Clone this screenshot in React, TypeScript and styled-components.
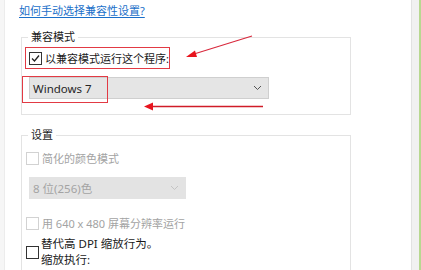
import styled, { createGlobalStyle } from 'styled-components';

const GlobalStyle = createGlobalStyle`
  html, body {
    margin: 0;
    padding: 0;
    background: #ffffff;
  }
  body {
    font-family: "Noto Sans", "Noto Sans CJK SC", sans-serif;
    font-size: 11px;
    color: #1a1a1a;
  }
`;

const Page = styled.div`
  position: relative;
  display: flex;
  width: 421px;
  height: 270px;
  overflow: hidden;
  background: #ffffff;
`;

const LeftEdge = styled.div`
  width: 4px;
  flex: none;
  background: #f6f6f6;
  border-right: 1px solid #ececec;
`;

const Main = styled.div`
  flex: 1;
  display: flex;
  flex-direction: column;
  align-items: flex-start;
  padding: 3px 0 0 14px;
`;

const RightEdge = styled.div`
  width: 7px;
  flex: none;
  margin-left: auto;
  background: #f1f1f1;
  border-left: 1px solid #e2e2e2;
  border-right: 2px solid #b8d890;
`;

const HelpLink = styled.a`
  color: #1a6fc9;
  text-decoration: underline;
  text-underline-offset: 2px;
  line-height: 15px;
  cursor: pointer;
`;

const Group = styled.fieldset<{ $top: number; $open?: boolean }>`
  margin: ${(p) => p.$top}px 0 0 2px;
  width: 330px;
  box-sizing: border-box;
  padding: 3px 0 ${(p) => (p.$open ? 40 : 15)}px 3px;
  border: 1px solid #e3e3e3;
  ${(p) => (p.$open ? 'border-bottom: none;' : '')}
  display: flex;
  flex-direction: column;
  align-items: flex-start;
`;

const Legend = styled.legend`
  margin-left: 3px;
  padding: 0 3px;
  line-height: 14px;
  color: #1a1a1a;
`;

const Highlight = styled.div`
  border: 1px solid #e23a44;
  width: 145px;
  height: 22px;
  box-sizing: border-box;
  display: flex;
  align-items: center;
  padding-left: 3px;
`;

const CheckRow = styled.label<{ $disabled?: boolean }>`
  display: flex;
  align-items: center;
  gap: 3px;
  line-height: 15px;
  white-space: nowrap;
  color: ${(p) => (p.$disabled ? '#a3a3a3' : '#1a1a1a')};
`;

const Box = styled.span<{ $disabled?: boolean }>`
  width: 11px;
  height: 11px;
  flex: none;
  border: 1px solid ${(p) => (p.$disabled ? '#d2d2d2' : '#333333')};
  background: #ffffff;
  display: flex;
  align-items: center;
  justify-content: center;
`;

const SelectWrap = styled.div<{ $gap: number }>`
  position: relative;
  margin: ${(p) => p.$gap}px 0 0 4px;
`;

const Select = styled.div<{ $width: number; $disabled?: boolean }>`
  width: ${(p) => p.$width}px;
  height: 22px;
  box-sizing: border-box;
  background: ${(p) => (p.$disabled ? '#e3e3e3' : '#e5e5e5')};
  border: 1px solid ${(p) => (p.$disabled ? '#e3e3e3' : '#cfcfcf')};
  display: flex;
  align-items: center;
  justify-content: space-between;
  padding: 0 6px 0 3px;
  font-size: 11.5px;
  color: ${(p) => (p.$disabled ? '#a3a3a3' : '#262626')};
`;

const SelectMark = styled.div`
  position: absolute;
  left: -7px;
  top: -1px;
  width: 86px;
  height: 27px;
  box-sizing: border-box;
  border: 1px solid #e23a44;
`;

const Stack = styled.div<{ $gap: number }>`
  display: flex;
  flex-direction: column;
  align-items: flex-start;
  margin-top: ${(p) => p.$gap}px;
  padding-left: 1px;
`;

const TwoLine = styled.div`
  display: flex;
  align-items: center;
  gap: 2px;
  margin-top: 6px;
  padding-left: 1px;
`;

const Lines = styled.div`
  display: flex;
  flex-direction: column;
  line-height: 16px;
  font-size: 11.5px;
  margin-top: -1px;
`;

const Annotations = styled.svg`
  position: absolute;
  left: 0;
  top: 0;
  pointer-events: none;
`;

const Chevron = ({ color }: { color: string }) => (
  <svg width="9" height="6" viewBox="0 0 9 6">
    <path d="M1 1 L4.5 4.5 L8 1" fill="none" stroke={color} strokeWidth="1" />
  </svg>
);

const Check = () => (
  <svg width="9" height="9" viewBox="0 0 9 9">
    <path d="M1 4.5 L3.5 7 L8 1.5" fill="none" stroke="#222" strokeWidth="1.3" />
  </svg>
);

export default function App() {
  return (
    <Page>
      <GlobalStyle />
      <LeftEdge />
      <Main>
        <HelpLink>如何手动选择兼容性设置?</HelpLink>

        <Group $top={12}>
          <Legend>兼容模式</Legend>
          <Highlight>
            <CheckRow>
              <Box>
                <Check />
              </Box>
              以兼容模式运行这个程序:
            </CheckRow>
          </Highlight>
          <SelectWrap $gap={8}>
            <Select $width={240}>
              <span>Windows 7</span>
              <Chevron color="#555" />
            </Select>
            <SelectMark />
          </SelectWrap>
        </Group>

        <Group $top={13} $open>
          <Legend>设置</Legend>
          <Stack $gap={6}>
            <CheckRow $disabled>
              <Box $disabled />
              简化的颜色模式
            </CheckRow>
          </Stack>
          <SelectWrap $gap={11}>
            <Select $width={157} $disabled>
              <span>8 位(256)色</span>
              <Chevron color="#c4c4c4" />
            </Select>
          </SelectWrap>
          <Stack $gap={17}>
            <CheckRow $disabled>
              <Box $disabled />
              用 640 x 480 屏幕分辨率运行
            </CheckRow>
          </Stack>
          <TwoLine>
            <Box />
            <Lines>
              <span>替代高 DPI 缩放行为。</span>
              <span>缩放执行:</span>
            </Lines>
          </TwoLine>
        </Group>
      </Main>
      <RightEdge />

      <Annotations width="421" height="270" viewBox="0 0 421 270">
        <line x1="252" y1="36" x2="194" y2="54" stroke="#d8283c" strokeWidth="1.1" />
        <polygon points="186,57 195,50.5 197,57" fill="#e8141e" />
        <line x1="263" y1="106.5" x2="152" y2="106.5" stroke="#d01c28" strokeWidth="1.3" />
        <polygon points="144,106.5 153,102.5 153,110.5" fill="#e8141e" />
      </Annotations>
    </Page>
  );
}
